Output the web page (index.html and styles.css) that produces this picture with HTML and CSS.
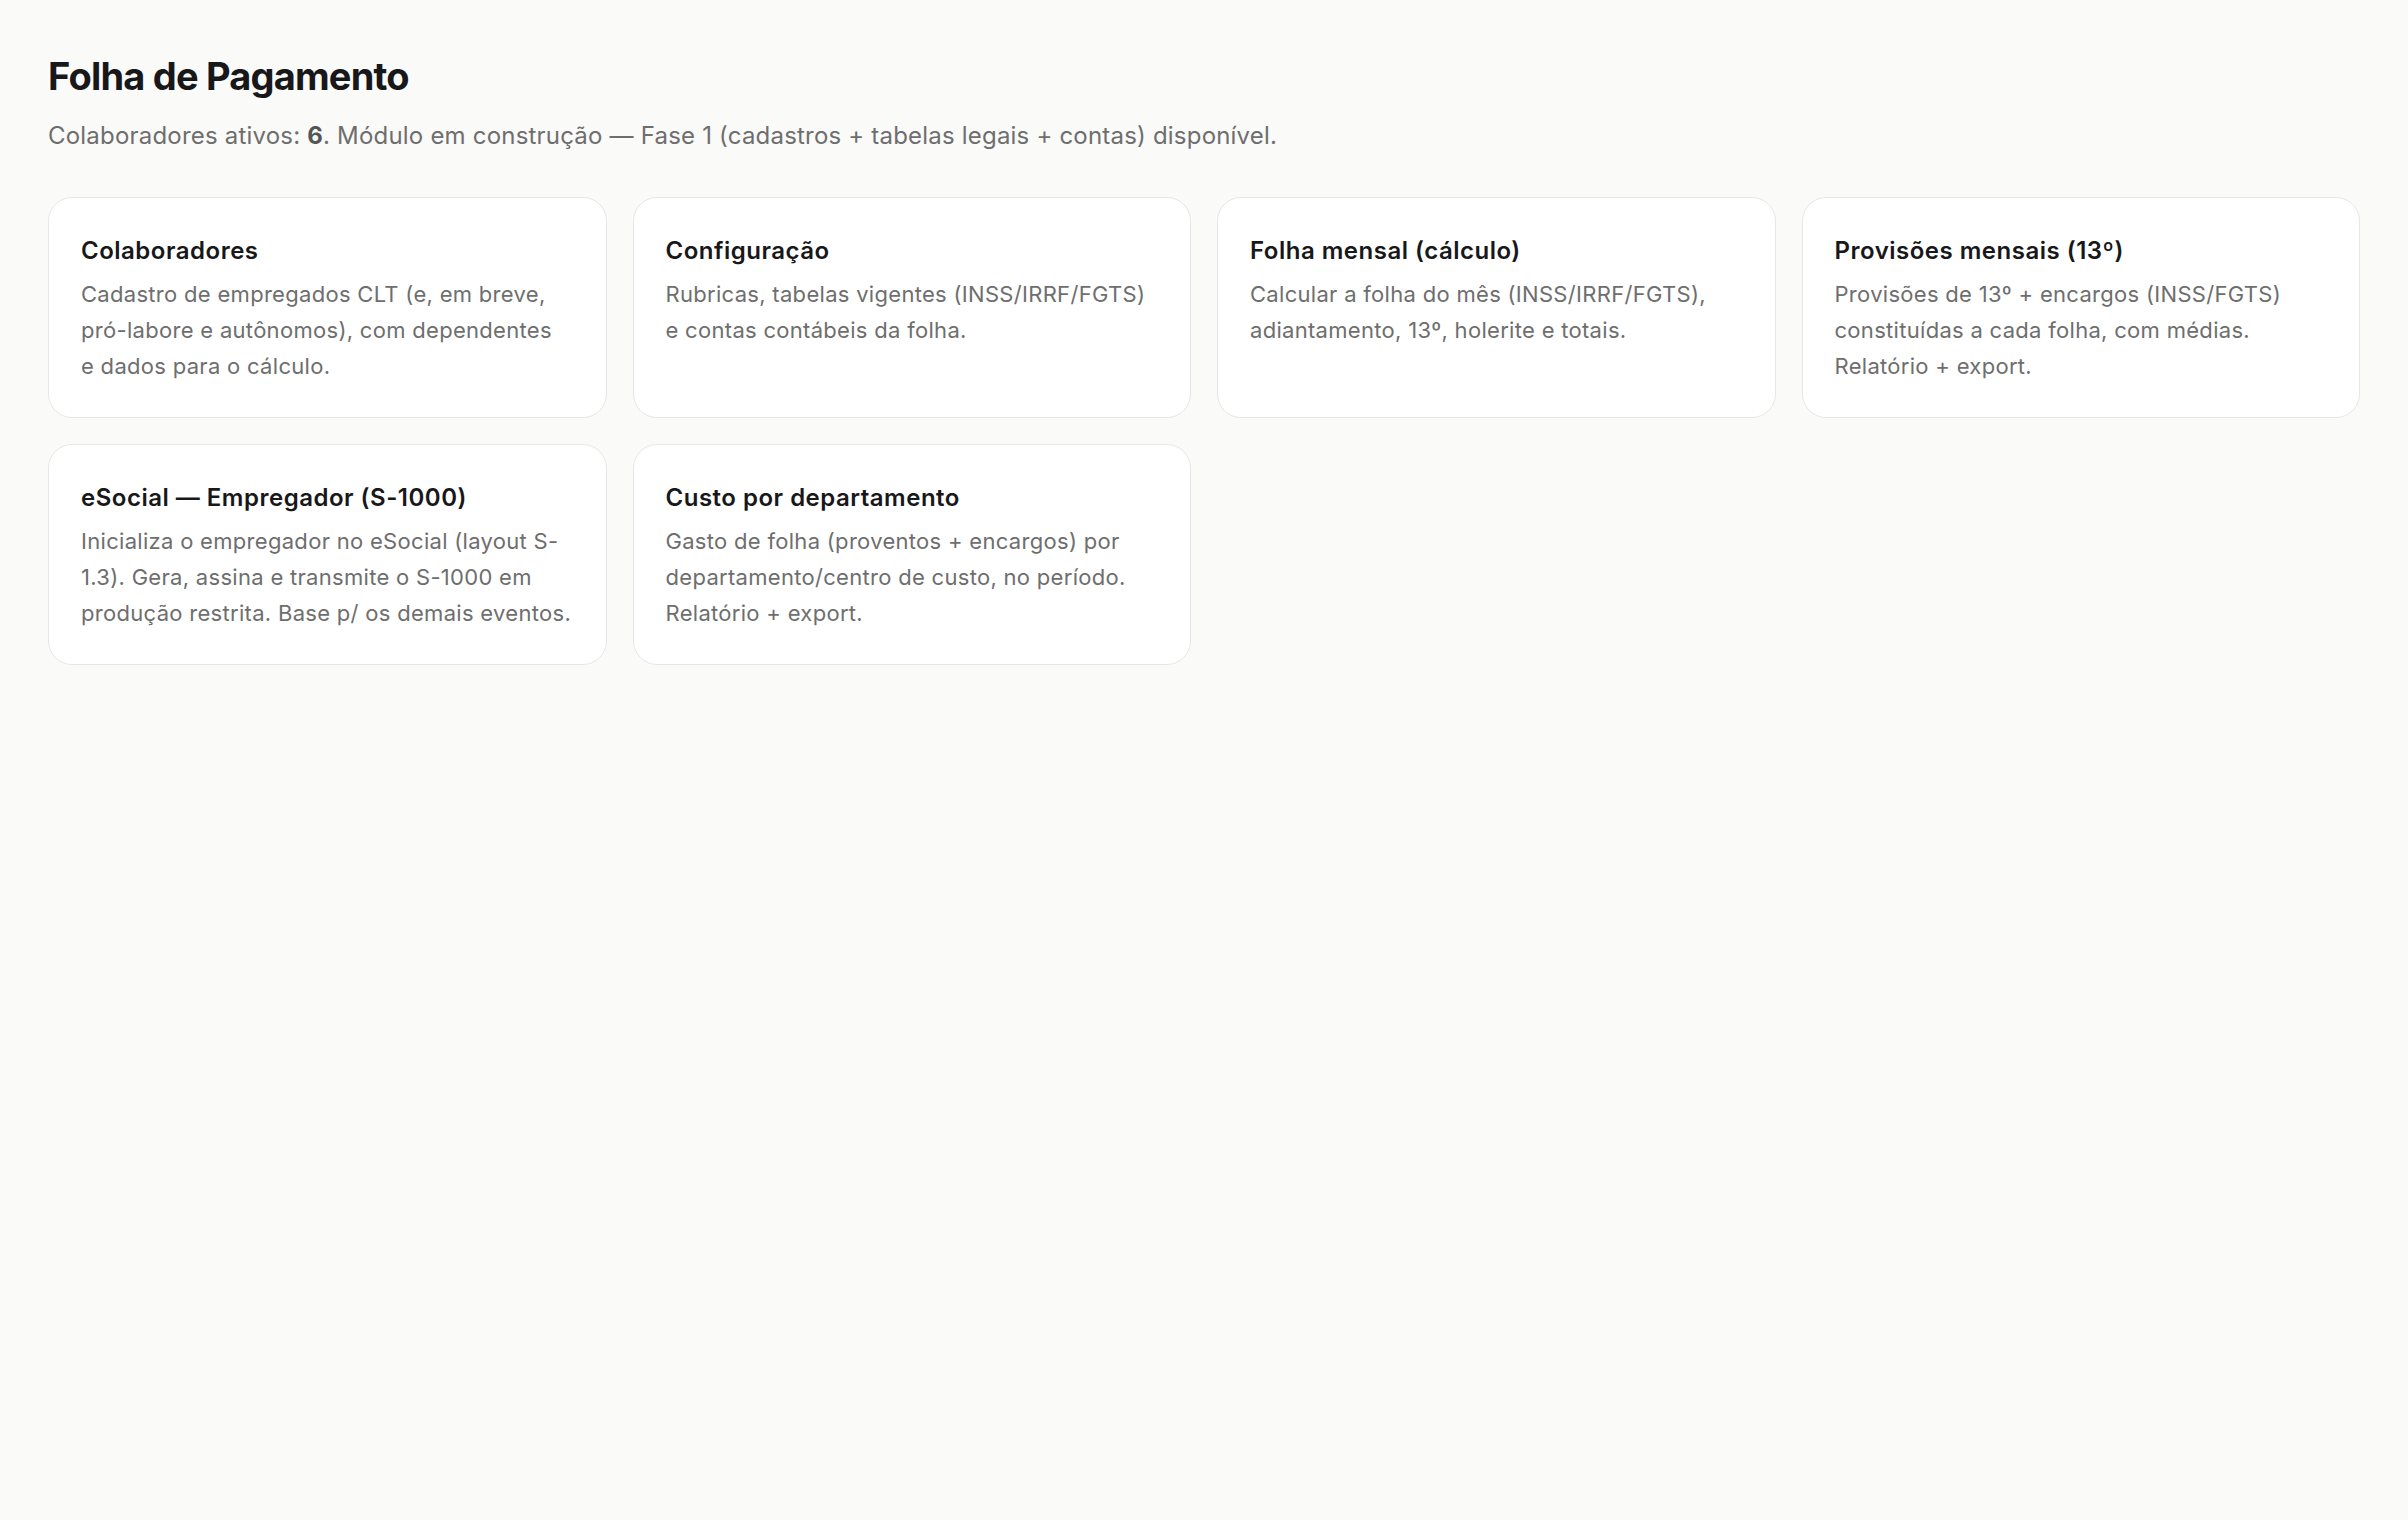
FILE: index.html
```html
<!DOCTYPE html>
<html lang="pt-BR">
<head>
    <meta charset="UTF-8">
    <meta name="viewport" content="width=device-width, initial-scale=1.0">
    <title>Folha de Pagamento</title>
    <link rel="stylesheet" href="styles.css">
</head>
<body>
    <main class="page">
        <header class="page-header">
            <h1>Folha de Pagamento</h1>
            <p class="lead">Colaboradores ativos: <strong>6</strong>. Módulo em construção — Fase 1 (cadastros + tabelas legais + contas) disponível.</p>
        </header>

        <div class="module-grid">
            <a class="module-card" href="#colaboradores">
                <h2>Colaboradores</h2>
                <p>Cadastro de empregados CLT (e, em breve, pró-labore e autônomos), com dependentes e&nbsp;dados para o cálculo.</p>
            </a>
            <a class="module-card" href="#configuracao">
                <h2>Configuração</h2>
                <p>Rubricas, tabelas vigentes (INSS/IRRF/FGTS) e contas contábeis da folha.</p>
            </a>
            <a class="module-card" href="#folha-mensal">
                <h2>Folha mensal (cálculo)</h2>
                <p>Calcular a folha do mês (INSS/IRRF/FGTS), adiantamento, 13º, holerite e totais.</p>
            </a>
            <a class="module-card" href="#provisoes">
                <h2>Provisões mensais (13º)</h2>
                <p>Provisões de 13º + encargos (INSS/FGTS) constituídas a cada folha, com médias. Relatório + export.</p>
            </a>
            <a class="module-card" href="#esocial">
                <h2>eSocial — Empregador (S-1000)</h2>
                <p>Inicializa o empregador no eSocial (layout S-1.3). Gera, assina e transmite o S-1000 em produção restrita. Base p/ os demais eventos.</p>
            </a>
            <a class="module-card" href="#custo-departamento">
                <h2>Custo por departamento</h2>
                <p>Gasto de folha (proventos + encargos) por departamento/centro de custo, no período. Relatório + export.</p>
            </a>
        </div>
    </main>
</body>
</html>
```

FILE: styles.css
```css
:root {
    --background-color: #fafaf9;
    --card-background: #ffffff;
    --border-color: #e9e7e4;
    --title-color: #18181a;
    --muted-color: #6e6e6e;
    --border-radius: 24px;
}

body {
    font-family: Inter, Roboto, "Liberation Sans", sans-serif;
    margin: 0;
    background-color: var(--background-color);
    color: var(--title-color);
}

.page {
    padding: 52px 48px 48px;
}

.page-header h1 {
    font-size: 38px;
    line-height: 48px;
    font-weight: 700;
    margin: 0 0 18px;
    letter-spacing: -0.8px;
}

.lead {
    font-size: 24px;
    line-height: 36px;
    letter-spacing: 0.2px;
    color: var(--muted-color);
    margin: 0 0 43px;
}

.lead strong {
    color: #555;
}

.module-grid {
    display: grid;
    grid-template-columns: repeat(4, 1fr);
    gap: 26px;
}

.module-card {
    display: block;
    background: var(--card-background);
    border: 1.5px solid var(--border-color);
    border-radius: var(--border-radius);
    padding: 37px 32px 33px;
    text-decoration: none;
    color: inherit;
}

.module-card h2 {
    font-size: 24px;
    line-height: 31px;
    font-weight: 600;
    letter-spacing: 0.5px;
    margin: 0 0 10px;
}

.module-card p {
    font-size: 22px;
    line-height: 36px;
    letter-spacing: 0.3px;
    color: var(--muted-color);
    margin: 0;
}
```
